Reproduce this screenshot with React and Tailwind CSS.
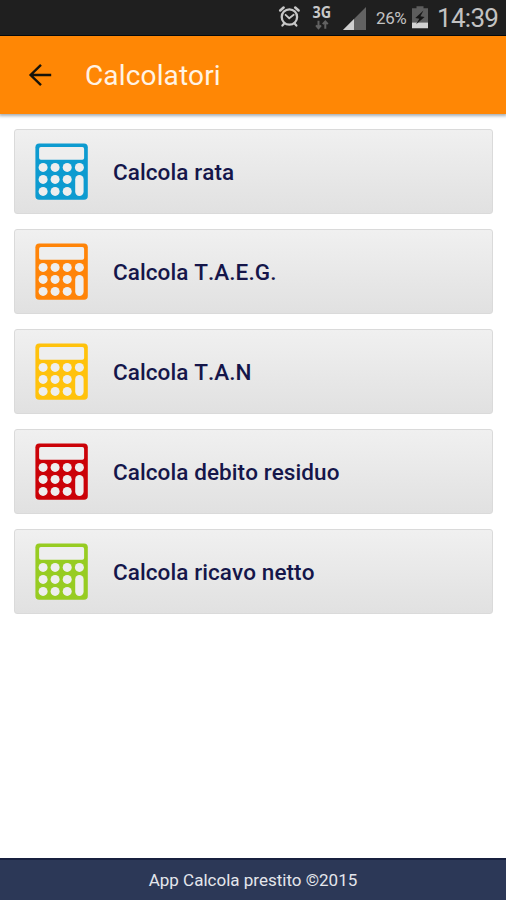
const items = [
  { label: 'Calcola rata', color: '#0d9bd0' },
  { label: 'Calcola T.A.E.G.', color: '#ff8408' },
  { label: 'Calcola T.A.N', color: '#ffc20c' },
  { label: 'Calcola debito residuo', color: '#cb0208' },
  { label: 'Calcola ricavo netto', color: '#97cc22' },
];

function Calculator({ color }) {
  const cols = [8.1, 20.1, 32.2, 44.4];
  return (
    <svg className="h-[57px] w-[53px] shrink-0" viewBox="0 0 53 57">
      <rect x="0.4" y="0.4" width="52.4" height="56.4" rx="3.8" fill={color} />
      <g fill="#eeeeee">
        <rect x="4.1" y="4.1" width="45" height="12.6" rx="1.8" />
        {[24.4, 36.4, 48.4].map((y, row) =>
          cols.slice(0, row === 0 ? 4 : 3).map((x) => <circle key={`${x}-${y}`} cx={x} cy={y} r="4.5" />)
        )}
        <rect x="40.2" y="32.1" width="8.4" height="20.8" rx="4.2" />
      </g>
    </svg>
  );
}

function StatusBar() {
  return (
    <div className="flex h-9 shrink-0 items-center border-b border-black bg-[#1f1f1f] text-[#c2c2c2]">
      <svg className="-mt-px h-9 w-[108px] ml-[270px] shrink-0" viewBox="270 0 108 36">
        <g fill="none" stroke="#c8c8c8" strokeLinecap="round">
          <circle cx="289.4" cy="18" r="7.7" strokeWidth="2.3" />
          <path d="M285.6 15.8l3.6 3.4 4.5-3.4" strokeWidth="1.8" />
          <path d="M280.2 11.4l3.4-2.8M298.6 11.4l-3.4-2.8" strokeWidth="2.6" />
          <path d="M284 24.8l-1.6 1.8M294.8 24.8l1.6 1.8" strokeWidth="2.2" />
        </g>
        <text x="312.6" y="19" fontFamily="'Noto Sans', sans-serif" fontWeight="700" fontSize="16" textLength="18.6" lengthAdjust="spacingAndGlyphs" fill="#c8c8c8">3G</text>
        <g fill="none" stroke="#626262" strokeWidth="2">
          <path d="M318.5 21.8v7.2M316 26.4l2.5 2.8 2.5-2.8M325.3 29.8v-7.2M322.8 25.2l2.5-2.8 2.5 2.8" />
        </g>
        <path d="M366 8v23h-23z" fill="#626262" />
        <path d="M354 20v11h-11z" fill="#cfcfcf" />
      </svg>
      <span className="w-[31px] whitespace-nowrap pt-px -ml-[2px] text-[17px] leading-5 tracking-[-0.4px]">26%</span>
      <svg className="h-9 w-[18px] ml-1 shrink-0" viewBox="411 0 18 36">
        <path d="M416.5 6.2h7v2h4.5v20h-16v-20h4.5z" fill="#5d5d5d" />
        <path d="M412 22.6h16v5.6H412z" fill="#d2d2d2" />
        <path d="M423.5 10.5l-8.2 7.6 4 .7-3.2 5.5 8.5-7.3-4.2-.8z" fill="#161616" />
      </svg>
      <span className="ml-[8px] whitespace-nowrap text-[26px] leading-8 tracking-[-0.7px]">14:39</span>
    </div>
  );
}

export default function App() {
  return (
    <div className="flex h-[900px] w-[506px] flex-col overflow-hidden bg-white font-[Roboto,sans-serif]">
      <StatusBar />
      <header className="z-10 flex h-[78px] shrink-0 items-center bg-[#ff8705] shadow-[0_1px_3px_1px_rgba(40,60,75,0.42)]">
        <svg className="ml-7 h-6 w-6 shrink-0" viewBox="0 0 24 24" fill="none" stroke="#17130a" strokeWidth="2.4">
          <path d="M23.2 12H2.5M13 1.8L2.6 12 13 22.2" />
        </svg>
        <h1 className="ml-[33px] pt-0.5 text-[28px] leading-8 tracking-[0.15px] text-[#fff3e4]">Calcolatori</h1>
      </header>
      <main className="flex flex-1 flex-col gap-[15px] px-3.5 pt-[15px]">
        {items.map((item) => (
          <button
            key={item.label}
            className="flex h-[85px] w-[479px] shrink-0 items-center rounded-[3px] border border-[#dadada] bg-linear-to-b from-[#f0f0f0] to-[#e1e1e1] pl-5 text-left"
          >
            <Calculator color={item.color} />
            <span className="ml-[25px] text-[22.5px] leading-7 font-medium tracking-[0.08px] text-[#15164a] [font-kerning:none]">
              {item.label}
            </span>
          </button>
        ))}
      </main>
      <footer className="flex h-[42px] shrink-0 items-center justify-center border-t-2 border-[#18203f] bg-[#2c3857] pt-px text-[17px] text-[#e4e6ec]">
        App Calcola prestito ©2015
      </footer>
    </div>
  );
}
